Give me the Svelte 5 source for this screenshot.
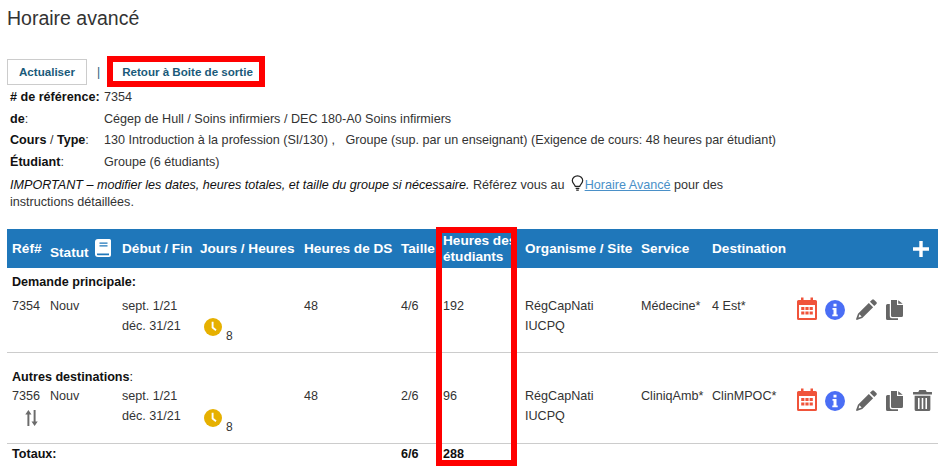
<script>
  // even-index parts are bold, odd-index parts are plain
  const info = [
    { parts: ["# de référence:"], text: "7354" },
    { parts: ["de", ":"], text: "Cégep de Hull / Soins infirmiers / DEC 180-A0 Soins infirmiers" },
    { parts: ["Cours", " / ", "Type", ":"], text: "130 Introduction à la profession (SI/130) ,   Groupe (sup. par un enseignant) (Exigence de cours: 48 heures par étudiant)" },
    { parts: ["Étudiant", ":"], text: "Groupe (6 étudiants)" },
  ];

  const groups = [
    {
      title: "Demande principale:",
      ref: "7354",
      size: "4/6",
      hours: "192",
      service: "Médecine*",
      dest: "4 Est*",
      extra: false,
    },
    {
      title: "Autres destinations:",
      ref: "7356",
      size: "2/6",
      hours: "96",
      service: "CliniqAmb*",
      dest: "ClinMPOC*",
      extra: true,
    },
  ];
</script>

<main class="page">
  <h1>Horaire avancé</h1>

  <div class="actions">
    <button class="btn bordered">Actualiser</button>
    <span class="sep">|</span>
    <button class="btn">Retour à Boite de sortie</button>
    <span class="mark mark-back"></span>
  </div>

  <dl class="info">
    {#each info as row}
      <dt>{#each row.parts as part, i}{#if i % 2 === 0}<strong>{part}</strong>{:else}{part}{/if}{/each}</dt>
      <dd>{row.text}</dd>
    {/each}
  </dl>

  <p class="note">
    <em>IMPORTANT – modifier les dates, heures totales, et taille du groupe si nécessaire.</em>
    Référez vous au
    <svg class="bulb" viewBox="0 0 14 18" width="13" height="17" fill="none" stroke="#222" stroke-width="1.3">
      <path d="M4.6 12.2C4.2 10 1.4 8.9 1.4 5.9a5.6 5.2 0 0 1 11.2 0c0 3-2.8 4.1-3.2 6.3z" />
      <path d="M5 14.2h4M5.6 16.2h2.8" />
    </svg>
    <a href="#horaire">Horaire Avancé</a> pour des instructions détaillées.
  </p>

  <div class="table-wrap">
    <table>
      <colgroup>
        <col style="width: 38px" />
        <col style="width: 72px" />
        <col style="width: 78px" />
        <col style="width: 104px" />
        <col style="width: 97px" />
        <col style="width: 42px" />
        <col style="width: 82px" />
        <col style="width: 116px" />
        <col style="width: 71px" />
        <col style="width: 85px" />
        <col />
      </colgroup>
      <thead>
        <tr>
          <th>Réf#</th>
          <th>
            <span class="statut">Statut</span>
            <svg class="book" viewBox="0 0 16 18" width="16" height="18">
              <path fill="#fff" d="M3 0h11.5A1.5 1.5 0 0 1 16 1.5V16a2 2 0 0 1-2 2H3a3 3 0 0 1-3-3V3a3 3 0 0 1 3-3z" />
              <path fill="#1f77ba" d="M2 14.6h12v1.7H2.8a.9.9 0 0 1-.8-.9zM4.5 3.5h8v1.2h-8zM4.5 6.2h8v1.2h-8z" />
            </svg>
          </th>
          <th>Début / Fin</th>
          <th>Jours / Heures</th>
          <th>Heures de DS</th>
          <th>Taille</th>
          <th class="two-lines">Heures des étudiants</th>
          <th>Organisme / Site</th>
          <th>Service</th>
          <th>Destination</th>
          <th class="add">
            <svg viewBox="0 0 16 16" width="16" height="16">
              <path fill="#fff" d="M6.3 0h3.4v6.3H16v3.4H9.7V16H6.3V9.7H0V6.3h6.3z" />
            </svg>
          </th>
        </tr>
      </thead>
      {#each groups as group}
        <tbody class:first={!group.extra}>
          <tr class="title-row">
            <td colspan="11"><strong>{group.title.slice(0, -1)}</strong>{#if group.extra}:{:else}<strong>:</strong>{/if}</td>
          </tr>
          <tr class="data-row">
            <td>
              {group.ref}
              {#if group.extra}
                <svg class="swap" viewBox="0 0 14 18" width="13" height="16" fill="#6b6b6b">
                  <path d="M3.5 0 7 5H4.6v13H2.4V5H0zM10.5 18 7 13h2.4V0h2.2v13H14z" />
                </svg>
              {/if}
            </td>
            <td>Nouv</td>
            <td>sept. 1/21<br />déc. 31/21</td>
            <td>
              <div class="clock">
                <svg viewBox="0 0 18 18" width="18" height="18">
                  <circle cx="9" cy="9" r="9" fill="#e6b000" />
                  <path d="M8.6 3.8v5.8l3.4 2.6" fill="none" stroke="#fff" stroke-width="1.9" />
                </svg>
                <span class="count">8</span>
              </div>
            </td>
            <td>48</td>
            <td>{group.size}</td>
            <td>{group.hours}</td>
            <td>RégCapNati<br />IUCPQ</td>
            <td>{group.service}</td>
            <td>{group.dest}</td>
            <td class="tools">
              <div class="tool-row">
                <svg class="cal" viewBox="0 0 20 23" width="20" height="23">
                  <path fill="#f0533a" d="M1.5 3H4V.5h2.5V3h7V.5H16V3h2.5A1.5 1.5 0 0 1 20 4.5v17a1.5 1.5 0 0 1-1.5 1.5h-17A1.5 1.5 0 0 1 0 21.5v-17A1.5 1.5 0 0 1 1.5 3zM2 8v13h16V8z" />
                  <path fill="#f0533a" d="M4.2 10h3.2v3H4.2zM8.4 10h3.2v3H8.4zM12.6 10h3.2v3h-3.2zM4.2 14.5h3.2v3H4.2zM8.4 14.5h3.2v3H8.4zM12.6 14.5h3.2v3h-3.2z" />
                </svg>
                <svg class="inf" viewBox="0 0 20 20" width="20" height="20">
                  <circle cx="10" cy="10" r="10" fill="#4a6ef5" />
                  <path fill="#fff" d="M8.5 3.8h3v2.8h-3zM7.5 8h4v6.5h1.2v1.7H7.3v-1.700h1.2V9.700h-1z" />
                </svg>
                <svg class="pen" viewBox="0 0 20 20" width="21" height="21">
                  <path fill="#666" d="M15.3.6a1.3 1.3 0 0 1 1.8 0l2.3 2.3a1.3 1.3 0 0 1 0 1.8l-2 2-4.1-4.1zM12.2 3.7l4.1 4.1L6 18.1.7 20 0 19.3l1.9-5.300zM3.3 14.600l-.9 3 3-.9z" />
                </svg>
                <svg class="copy" viewBox="0 0 17 20" width="17" height="20">
                  <path fill="#666" d="M5 0h6v5h6v10.500A1.500 1.500 0 0 1 15.500 17H6.500A1.500 1.500 0 0 1 5 15.500zM12.200.3 16.700 3.800h-4.500zM3.800 4v12.200A2 2 0 0 0 5.800 18.200H12V20H1.500A1.500 1.500 0 0 1 0 18.500V5.500A1.500 1.500 0 0 1 1.500 4z" />
                </svg>
                {#if group.extra}
                  <svg class="trash" viewBox="0 0 18 20" width="19" height="21">
                    <path fill="#666" d="M6 0h6l1 2h5v2.200H0V2h5zM1.500 5.500h15V18.500A1.500 1.500 0 0 1 15 20H3a1.500 1.500 0 0 1-1.500-1.500z" />
                    <path fill="#fff" d="M4.700 7.500h1.500v10.500H4.700zM8.250 7.500h1.500v10.500h-1.500zM11.800 7.500h1.500v10.500h-1.500z" />
                  </svg>
                {/if}
              </div>
            </td>
          </tr>
        </tbody>
      {/each}
      <tfoot>
        <tr>
          <td colspan="5">Totaux:</td>
          <td>6/6</td>
          <td>288</td>
          <td colspan="4"></td>
        </tr>
      </tfoot>
    </table>
    <span class="mark mark-hours"></span>
  </div>
</main>

<style>
  :global(body) {
    margin: 0;
    background: #fff;
  }

  .page {
    width: 938px;
    height: 472px;
    overflow: hidden;
    box-sizing: border-box;
    padding: 6px 0 0 7px;
    font-family: "Liberation Sans", Arial, sans-serif;
    font-size: 12.6px;
    line-height: 18px;
    color: #333;
  }

  h1 {
    margin: 0;
    font-size: 19.5px;
    line-height: 24px;
    font-weight: 400;
    color: #333;
  }

  .actions {
    position: relative;
    display: flex;
    align-items: center;
    margin-top: 29px;
    height: 26px;
  }

  .btn {
    height: 26px;
    padding: 0 15px 2px;
    border: 0;
    background: #fff;
    font: bold 11.6px "Liberation Sans", Arial, sans-serif;
    color: #1a5a7a;
  }

  .btn.bordered {
    width: 80px;
    padding: 0 0 2px;
    border: 1px solid #ccc;
  }

  .sep {
    margin: 0 7px 0 10px;
    color: #1a5a7a;
    font-size: 12px;
  }

  .mark {
    position: absolute;
    box-sizing: border-box;
    border: 6px solid #f00;
    pointer-events: none;
  }

  .mark-back {
    left: 100px;
    top: -3px;
    width: 158px;
    height: 31px;
  }

  .info {
    display: grid;
    grid-template-columns: 94px 1fr;
    grid-auto-rows: 21.5px;
    margin: 3px 0 0 3px;
    color: #333;
  }

  dt {
    white-space: pre;
  }

  dt strong {
    font-weight: 700;
    color: #111;
  }

  dd {
    margin: 0;
    white-space: pre;
  }

  .note {
    width: 740px;
    height: 36px;
    margin: 1px 0 0 3px;
    line-height: 17px;
  }

  .note em {
    color: #111;
  }

  .bulb {
    vertical-align: -3px;
    margin: 0 -3px 0 3px;
  }

  .note a {
    color: #4a90c8;
  }

  .table-wrap {
    position: relative;
    margin-top: 18px;
  }

  table {
    width: 931px;
    table-layout: fixed;
    border-collapse: collapse;
  }

  thead tr {
    height: 39px;
    background: #1f77ba;
  }

  th {
    padding: 0 0 0 5px;
    color: #fff;
    font-size: 13.6px;
    line-height: 15px;
    font-weight: 700;
    text-align: left;
    white-space: nowrap;
  }

  .statut {
    position: relative;
    top: 2px;
    margin-right: 3px;
  }

  .book {
    vertical-align: -2px;
  }

  th.two-lines {
    white-space: normal;
    overflow: hidden;
    line-height: 16px;
  }

  th.add {
    text-align: right;
    padding-right: 9px;
  }

  th.add svg {
    vertical-align: -5px;
  }

  td {
    padding: 0 0 0 5px;
    vertical-align: top;
  }

  .title-row td {
    height: 23px;
    padding-bottom: 1px;
    vertical-align: bottom;
    color: #111;
    line-height: 18px;
  }

  .title-row strong {
    font-weight: 700;
    color: #111;
  }

  .data-row td {
    height: 56px;
    line-height: 20px;
    padding-top: 4px;
  }

  tbody {
    border-bottom: 1px solid #ccc;
  }

  tbody:not(.first) .title-row td {
    height: 33px;
    padding-bottom: 0;
  }

  tbody:not(.first) .data-row td {
    padding-top: 0;
    height: 57px;
  }

  .swap {
    display: block;
    margin: 4px 0 0 13px;
  }

  .clock {
    display: flex;
    align-items: flex-start;
    gap: 4px;
    margin: 22px 0 0 4px;
  }

  .count {
    margin-top: 11px;
    font-size: 12px;
    line-height: 14px;
  }

  tbody:not(.first) .clock {
    margin-top: 23px;
  }

  .data-row .tools {
    padding-top: 5px;
    height: 55px;
  }

  tbody:not(.first) .data-row .tools {
    padding-top: 2px;
    height: 55px;
  }

  .tool-row {
    display: flex;
    align-items: flex-start;
  }

  .cal {
    margin-right: 8px;
  }

  .inf {
    margin: 3px 11px 0 0;
  }

  .pen {
    margin: 2px 9px 0 0;
  }

  .copy {
    margin: 3px 10px 0 0;
  }

  .trash {
    margin-top: 2px;
  }

  tfoot td {
    padding-top: 2px;
    font-weight: 700;
    color: #111;
    line-height: 16px;
  }

  .mark-hours {
    left: 429px;
    top: -2px;
    width: 81px;
    height: 239px;
  }
</style>
